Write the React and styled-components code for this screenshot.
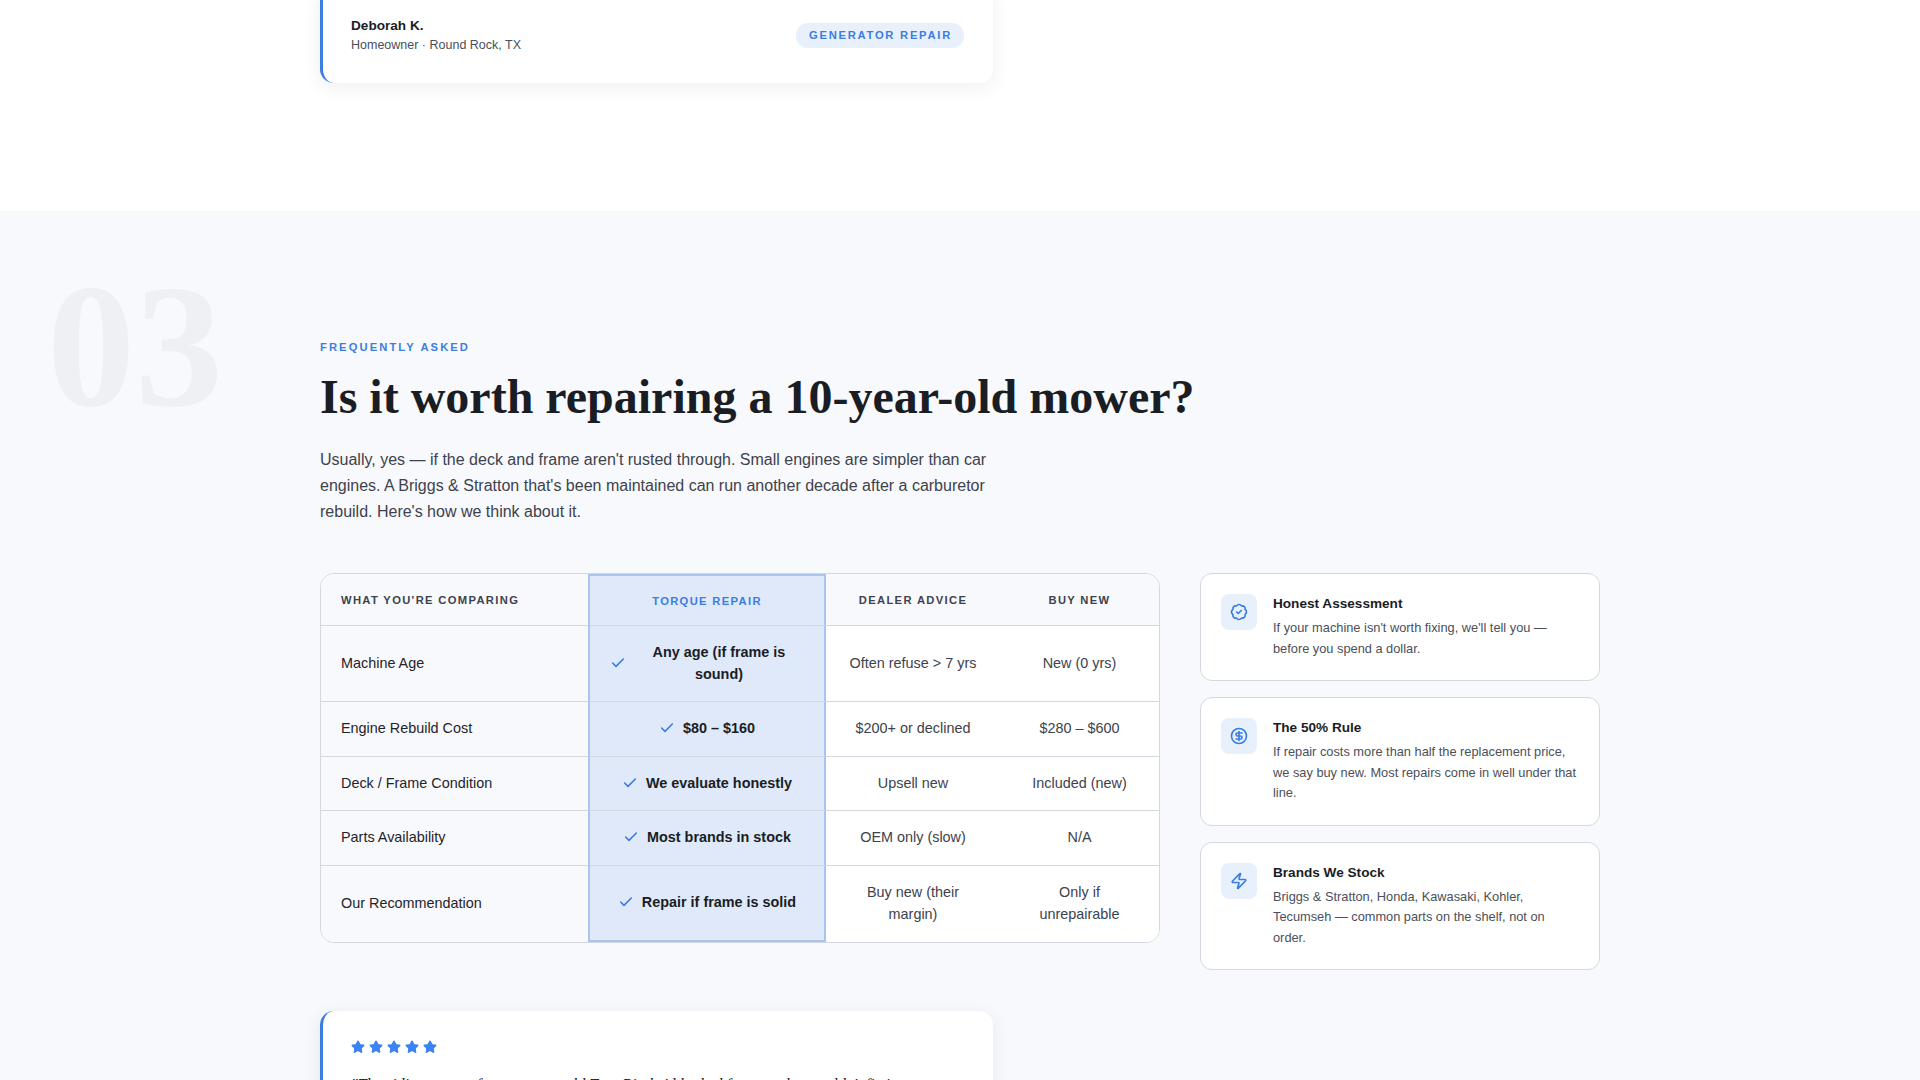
import React from 'react';
import styled, { createGlobalStyle } from 'styled-components';
import { Check, BadgeCheck, CircleDollarSign, Zap, Star } from 'lucide-react';

const Global = createGlobalStyle`
  * { box-sizing: border-box; }
  html, body { margin: 0; padding: 0; height: 1080px; overflow: hidden; background: #fff; }
  body { font-family: "Liberation Sans", Arial, sans-serif; color: #1a1d23; }
`;

const blue = '#3b7de0';

const TopSection = styled.div`
  display: flow-root;
  height: 211px;
  background: #fff;
  padding-left: 320px;
`;

const Testimonial = styled.div`
  width: 673px;
  background: #fff;
  border-left: 3px solid ${blue};
  border-radius: 14px;
  box-shadow: 0 4px 20px rgba(20, 30, 60, 0.07);
  padding: 29px 29px 28px 28px;
  margin-top: ${p => p.$top || 0}px;
`;

const Footer = styled.div`
  display: flex;
  align-items: center;
  justify-content: space-between;
`;

const Name = styled.div`
  font-size: 13.6px;
  font-weight: 700;
  line-height: 20px;
`;

const Role = styled.div`
  font-size: 12.5px;
  line-height: 19px;
  color: #4a4f5a;
`;

const Tag = styled.span`
  background: #e8f0fc;
  color: ${blue};
  font-size: 11.2px;
  font-weight: 700;
  letter-spacing: 1.75px;
  border-radius: 12px;
  padding: 6px 12px 6px 13px;
  line-height: 13px;
`;

const Section = styled.section`
  position: relative;
  height: 869px;
  background: #f8f9fc;
  padding: 128px 320px 0;
  overflow: hidden;
`;

const Ghost = styled.div`
  position: absolute;
  left: 47px;
  top: 45px;
  font-family: "Liberation Serif", serif;
  font-size: 176px;
  font-weight: 700;
  line-height: 180px;
  color: #eff0f4;
`;

const Eyebrow = styled.div`
  font-size: 11.2px;
  font-weight: 700;
  letter-spacing: 2.1px;
  line-height: 16px;
  color: ${blue};
`;

const Heading = styled.h2`
  margin: 13px 0 21px;
  font-family: "Liberation Serif", serif;
  font-size: 48px;
  font-weight: 700;
  line-height: 58px;
  color: #1a1d23;
`;

const Lead = styled.p`
  margin: 0;
  width: 680px;
  font-size: 16px;
  line-height: 25.8px;
  color: #3d424d;
`;

const Columns = styled.div`
  display: flex;
  align-items: flex-start;
  gap: 40px;
  margin-top: 49px;
`;

const TableWrap = styled.div`
  width: 840px;
  flex: none;
  background: #fff;
  border: 1px solid #d3d7df;
  border-radius: 14px;
  overflow: hidden;
`;

const Grid = styled.div`
  display: grid;
  grid-template-columns: 267px 238px 174px 159px;
`;

const Cell = styled.div`
  display: flex;
  align-items: center;
  justify-content: center;
  height: ${p => p.$h}px;
  padding: 0 20px 2px;
  text-align: center;
  font-size: 14.4px;
  line-height: 22px;
  color: #3d424d;
  background: #fff;
  border-top: ${p => (p.$first ? 'none' : '1px solid #d3d7df')};
`;

const LabelCell = styled(Cell)`
  justify-content: flex-start;
  text-align: left;
  color: #1f232b;
  background: #f8f9fc;
`;

const HeadCell = styled(Cell)`
  padding: 0 20px;
  font-size: 11.2px;
  font-weight: 700;
  letter-spacing: 1.344px;
  color: #3d424d;
  background: #f8f9fc;
`;

const HeadLabel = styled(HeadCell)`
  justify-content: flex-start;
`;

const Featured = styled(Cell)`
  gap: 8px;
  font-weight: 700;
  color: #1a1d23;
  background: #dfe9fa;
  border-left: 2px solid #a9c5ef;
  border-right: 2px solid #a9c5ef;
  ${p => p.$last && 'border-bottom: 2px solid #a9c5ef;'}
`;

const FeaturedHead = styled(HeadCell)`
  color: ${blue};
  background: #dfe9fa;
  border-top: 2px solid #a9c5ef;
  border-left: 2px solid #a9c5ef;
  border-right: 2px solid #a9c5ef;
`;

const Tick = styled(Check)`
  flex: none;
  color: ${blue};
`;

const FeaturedText = styled.span`
  flex: 0 1 auto;
`;

const Side = styled.div`
  width: 400px;
  display: flex;
  flex-direction: column;
  gap: 16px;
`;

const Info = styled.div`
  display: flex;
  gap: 16px;
  background: #fff;
  border: 1px solid #d3d7df;
  border-radius: 12px;
  padding: 20px;
`;

const IconBox = styled.div`
  flex: none;
  width: 36px;
  height: 36px;
  border-radius: 8px;
  background: #e8f0fc;
  color: ${blue};
  display: flex;
  align-items: center;
  justify-content: center;
`;

const InfoBody = styled.div`
  min-width: 0;
  padding-bottom: 1px;
`;

const InfoTitle = styled.div`
  font-size: 13.6px;
  font-weight: 700;
  line-height: 20px;
  margin-bottom: 4px;
  color: #1a1d23;
`;

const InfoText = styled.div`
  font-size: 12.8px;
  line-height: 20.48px;
  color: #4a4f5a;
`;

const Stars = styled.div`
  display: flex;
  gap: 4px;
  color: #3b82f6;
  margin-bottom: 18px;
`;

const Quote = styled.p`
  margin: 0;
  font-family: "Liberation Serif", serif;
  font-style: italic;
  font-size: 16px;
  line-height: 26px;
  color: #1a1d23;
`;

const rows = [
  ['Machine Age', 'Any age (if frame is sound)', 'Often refuse > 7 yrs', 'New (0 yrs)', 76],
  ['Engine Rebuild Cost', '$80 – $160', '$200+ or declined', '$280 – $600', 55],
  ['Deck / Frame Condition', 'We evaluate honestly', 'Upsell new', 'Included (new)', 54],
  ['Parts Availability', 'Most brands in stock', 'OEM only (slow)', 'N/A', 55],
  ['Our Recommendation', 'Repair if frame is solid', 'Buy new (their margin)', 'Only if unrepairable', 77],
];

const infos = [
  [BadgeCheck, 'Honest Assessment', "If your machine isn't worth fixing, we'll tell you — before you spend a dollar."],
  [CircleDollarSign, 'The 50% Rule', 'If repair costs more than half the replacement price, we say buy new. Most repairs come in well under that line.'],
  [Zap, 'Brands We Stock', 'Briggs & Stratton, Honda, Kawasaki, Kohler, Tecumseh — common parts on the shelf, not on order.'],
];

export default function App() {
  return (
    <>
      <Global />
      <TopSection>
        <Testimonial $top={-13}>
          <Footer>
            <div>
              <Name>Deborah K.</Name>
              <Role>Homeowner · Round Rock, TX</Role>
            </div>
            <Tag>GENERATOR REPAIR</Tag>
          </Footer>
        </Testimonial>
      </TopSection>
      <Section>
        <Ghost>03</Ghost>
        <Eyebrow>FREQUENTLY ASKED</Eyebrow>
        <Heading>Is it worth repairing a 10-year-old mower?</Heading>
        <Lead>
          Usually, yes — if the deck and frame aren't rusted through. Small engines are simpler than car engines. A Briggs &amp; Stratton that's been maintained can run another decade after a carburetor rebuild. Here's how we think about it.
        </Lead>
        <Columns>
          <TableWrap>
            <Grid>
              <HeadLabel $h={51} $first>WHAT YOU'RE COMPARING</HeadLabel>
              <FeaturedHead $h={51} $first>TORQUE REPAIR</FeaturedHead>
              <HeadCell $h={51} $first>DEALER ADVICE</HeadCell>
              <HeadCell $h={51} $first>BUY NEW</HeadCell>
              {rows.map((r, i) => (
                <React.Fragment key={r[0]}>
                  <LabelCell $h={r[4]}>{r[0]}</LabelCell>
                  <Featured $h={r[4]} $last={i === rows.length - 1}>
                    <Tick size={16} strokeWidth={2.4} />
                    <FeaturedText>{r[1]}</FeaturedText>
                  </Featured>
                  <Cell $h={r[4]}>{r[2]}</Cell>
                  <Cell $h={r[4]}>{r[3]}</Cell>
                </React.Fragment>
              ))}
            </Grid>
          </TableWrap>
          <Side>
            {infos.map(([Icon, title, text]) => (
              <Info key={title}>
                <IconBox><Icon size={18} strokeWidth={2.2} /></IconBox>
                <InfoBody>
                  <InfoTitle>{title}</InfoTitle>
                  <InfoText>{text}</InfoText>
                </InfoBody>
              </Info>
            ))}
          </Side>
        </Columns>
        <Testimonial $top={41}>
          <Stars>
            {[0, 1, 2, 3, 4].map(i => <Star key={i} size={14} fill="currentColor" strokeWidth={2} />)}
          </Stars>
          <Quote>"The riding mower for two years old Toro Pit, he'd looked for parts but couldn't fix it.</Quote>
        </Testimonial>
      </Section>
    </>
  );
}
